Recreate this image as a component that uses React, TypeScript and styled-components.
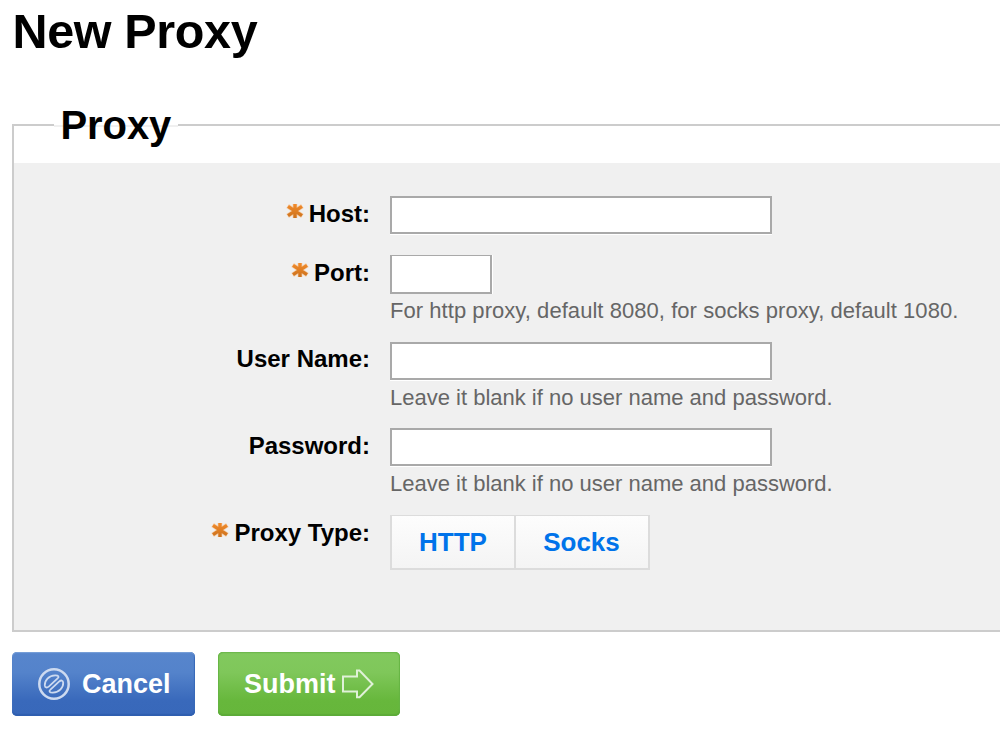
import {useState} from "react";
import styled, {createGlobalStyle} from "styled-components";

const GlobalStyle = createGlobalStyle`
  * {
    box-sizing: border-box;
  }
  body {
    margin: 0;
    background: #fff;
    color: #000;
    font-family: "Liberation Sans", Arial, sans-serif;
    overflow: hidden;
  }
`

const fields = [
    {
        name: "host",
        label: "Host:",
        type: "text",
        required: true,
        rowHeight: 59,
    },
    {
        name: "port",
        label: "Port:",
        type: "text",
        required: true,
        small: true,
        rowHeight: 87,
        help: "For http proxy, default 8080, for socks proxy, default 1080.",
    },
    {
        name: "username",
        label: "User Name:",
        type: "text",
        rowHeight: 86,
        labelHeight: 34,
        help: "Leave it blank if no user name and password.",
    },
    {
        name: "password",
        label: "Password:",
        type: "password",
        rowHeight: 87,
        help: "Leave it blank if no user name and password.",
    },
]

const proxyTypes = [
    {label: "HTTP", width: 126},
    {label: "Socks", width: 134},
]

const RequiredIcon = () => (
    <StarSvg viewBox="0 0 18 16">
        <defs>
            <linearGradient id="star" x1="0" y1="0" x2="0" y2="16" gradientUnits="userSpaceOnUse">
                <stop offset="0" stopColor="#f58d2c"/>
                <stop offset="1" stopColor="#c9701c"/>
            </linearGradient>
        </defs>
        <g stroke="#f6c08c" strokeOpacity="0.6" strokeWidth="4.8">
            <path d="M9 1V15M1.6 3L16.4 13M16.4 3L1.6 13"/>
        </g>
        <g stroke="url(#star)" strokeWidth="3.4">
            <path d="M9 1V15.01M2 3.3L16 12.7M16 3.3L2 12.7"/>
        </g>
    </StarSvg>
)

const CancelIcon = () => (
    <svg width="32" height="32" viewBox="0 0 32 32" fill="none" stroke="#cddaf0">
        <circle cx="16" cy="16" r="14.7" strokeWidth="2.5"/>
        <path
            d="M6.8 17.4C6.6 12.4 10.6 7.6 17.2 7.3C20.6 7.2 21.4 8.8 19.6 10.4L11 18.4C8.8 20.2 7 19.8 6.8 17.4Z"
            strokeWidth="1.8"
        />
        <path
            d="M25.2 14.6C25.4 19.6 21.4 24.4 14.8 24.7C11.4 24.8 10.6 23.2 12.4 21.6L21 13.6C23.2 11.8 25 12.2 25.2 14.6Z"
            strokeWidth="1.8"
        />
    </svg>
)

const ArrowIcon = () => (
    <svg width="34" height="30" viewBox="0 0 34 30" fill="none" stroke="#e0f1d8" strokeWidth="2">
        <path d="M1 7.5H15V1.5H17.5L30.5 15L17.5 28.3H15V22.5H1Z"/>
    </svg>
)

const App = () => {
    const [proxyType, setProxyType] = useState("");

    return (
        <Page>
            <GlobalStyle/>
            <PageTitle>New Proxy</PageTitle>
            <form onSubmit={e => e.preventDefault()}>
                <Fieldset>
                    <Legend>Proxy</Legend>
                    <Panel>
                        {fields.map(field => (
                            <Row key={field.name} $height={field.rowHeight}>
                                <Label htmlFor={field.name} $height={field.labelHeight}>
                                    {field.required && <RequiredIcon/>}
                                    {field.label}
                                </Label>
                                <Control>
                                    <Input id={field.name} type={field.type} $small={field.small}/>
                                    {field.help && <Help $wide={field.small}>{field.help}</Help>}
                                </Control>
                            </Row>
                        ))}
                        <Row $height={115}>
                            <Label as="span">
                                <RequiredIcon/>
                                Proxy Type:
                            </Label>
                            <ToggleGroup>
                                {proxyTypes.map(({label, width}) => (
                                    <Toggle
                                        key={label}
                                        type="button"
                                        $width={width}
                                        aria-pressed={proxyType === label}
                                        onClick={() => setProxyType(label)}
                                    >
                                        {label}
                                    </Toggle>
                                ))}
                            </ToggleGroup>
                        </Row>
                    </Panel>
                </Fieldset>
                <Actions>
                    <CancelButton type="button">
                        <CancelIcon/>
                        Cancel
                    </CancelButton>
                    <SubmitButton type="submit">
                        Submit
                        <ArrowIcon/>
                    </SubmitButton>
                </Actions>
            </form>
        </Page>
    )
}

const Page = styled.main`
  height: 739px;
  padding-left: 12px;
  overflow: hidden;
`

const PageTitle = styled.h1`
  height: 101px;
  margin: 0;
  padding: 2px 0 0 0.5px;
  font-size: 48.5px;
  line-height: 58px;
  letter-spacing: -0.35px;
`

const Fieldset = styled.fieldset`
  margin: 0;
  padding: 0;
  border: 2px solid #ccc;
  border-right: 0;
`

const Legend = styled.legend`
  height: 48px;
  margin-left: 40px;
  padding: 0 7px 0 6.5px;
  background: linear-gradient(#fff 24px, #f0f0f0 24px, #f0f0f0 26px, #fff 26px);
  font-size: 40px;
  font-weight: bold;
  line-height: 48px;
  letter-spacing: -0.1px;
`

const Panel = styled.div`
  margin-top: 14px;
  padding-top: 33px;
  background: #f0f0f0;
`

const Row = styled.div<{ $height: number }>`
  display: grid;
  grid-template-columns: 356px 1fr;
  column-gap: 20px;
  align-items: start;
  height: ${({ $height }) => $height}px;
`

const Label = styled.label<{ $height?: number }>`
  display: flex;
  justify-content: flex-end;
  align-items: center;
  gap: 5px;
  font-size: 24px;
  font-weight: bold;
  line-height: ${({ $height }) => $height ?? 36}px;
  white-space: nowrap;
`

const StarSvg = styled.svg`
  width: 18px;
  height: 16px;
  margin-bottom: 6px;
`

const Control = styled.div`
  display: flex;
  flex-direction: column;
  align-items: flex-start;
`

const Input = styled.input<{ $small?: boolean }>`
  width: ${({ $small }) => ($small ? 102 : 382)}px;
  height: ${({ $small }) => ($small ? 39 : 38)}px;
  margin: 0;
  padding: 0 6px;
  border: 2px solid #a9a9a9;
  border-top-width: ${({ $small }) => ($small ? 1 : 2)}px;
  border-radius: 0;
  outline: none;
  background: #fff;
  font: 22px "Liberation Sans", Arial, sans-serif;
  box-shadow: ${({ $small }) => ($small ? "1px 0 0 #fff" : "0 1px 0 #fff")};
`

const Help = styled.span<{ $wide?: boolean }>`
  color: #666;
  font-size: 22px;
  line-height: ${({ $wide }) => ($wide ? 34 : 36)}px;
  letter-spacing: ${({ $wide }) => ($wide ? "0.05px" : "normal")};
  white-space: nowrap;
`

const ToggleGroup = styled.div`
  display: flex;
`

const Toggle = styled.button<{ $width: number }>`
  width: ${({ $width }) => $width}px;
  height: 55px;
  padding: 0;
  border: 2px solid #dcdcdc;
  border-top-width: 1px;
  border-radius: 0;
  background: linear-gradient(#fdfdfd, #f4f4f4);
  color: #0073ea;
  font: bold 26px "Liberation Sans", Arial, sans-serif;

  & + & {
    padding-right: 1px;
    border-left: 0;
  }
`

const Actions = styled.div`
  display: flex;
  gap: 23px;
  margin-top: 20px;
`

const ActionButton = styled.button`
  display: flex;
  align-items: center;
  height: 64px;
  padding: 0 0 0 26px;
  border: 0;
  border-radius: 5px;
  color: #fff;
  font: bold 27px "Liberation Sans", Arial, sans-serif;
`

const CancelButton = styled(ActionButton)`
  width: 183px;
  gap: 12px;
  background: linear-gradient(#5785cc 0%, #5483cb 32%, #3969bb 76%, #3868ba 100%);
  box-shadow: inset 0 -2px 1px #2f5fb0, inset 0 1px 1px #79a0d9, inset -1px 0 1px #3264b5;
`

const SubmitButton = styled(ActionButton)`
  width: 182px;
  gap: 6px;
  background: linear-gradient(#82c95e 0%, #7fc75a 32%, #67b73c 76%, #66b63b 100%);
  box-shadow: inset 0 -2px 1px #5cab38, inset 0 1px 1px #6fb94e, inset 0 0 1px 1px #68b545;
`

export default App
